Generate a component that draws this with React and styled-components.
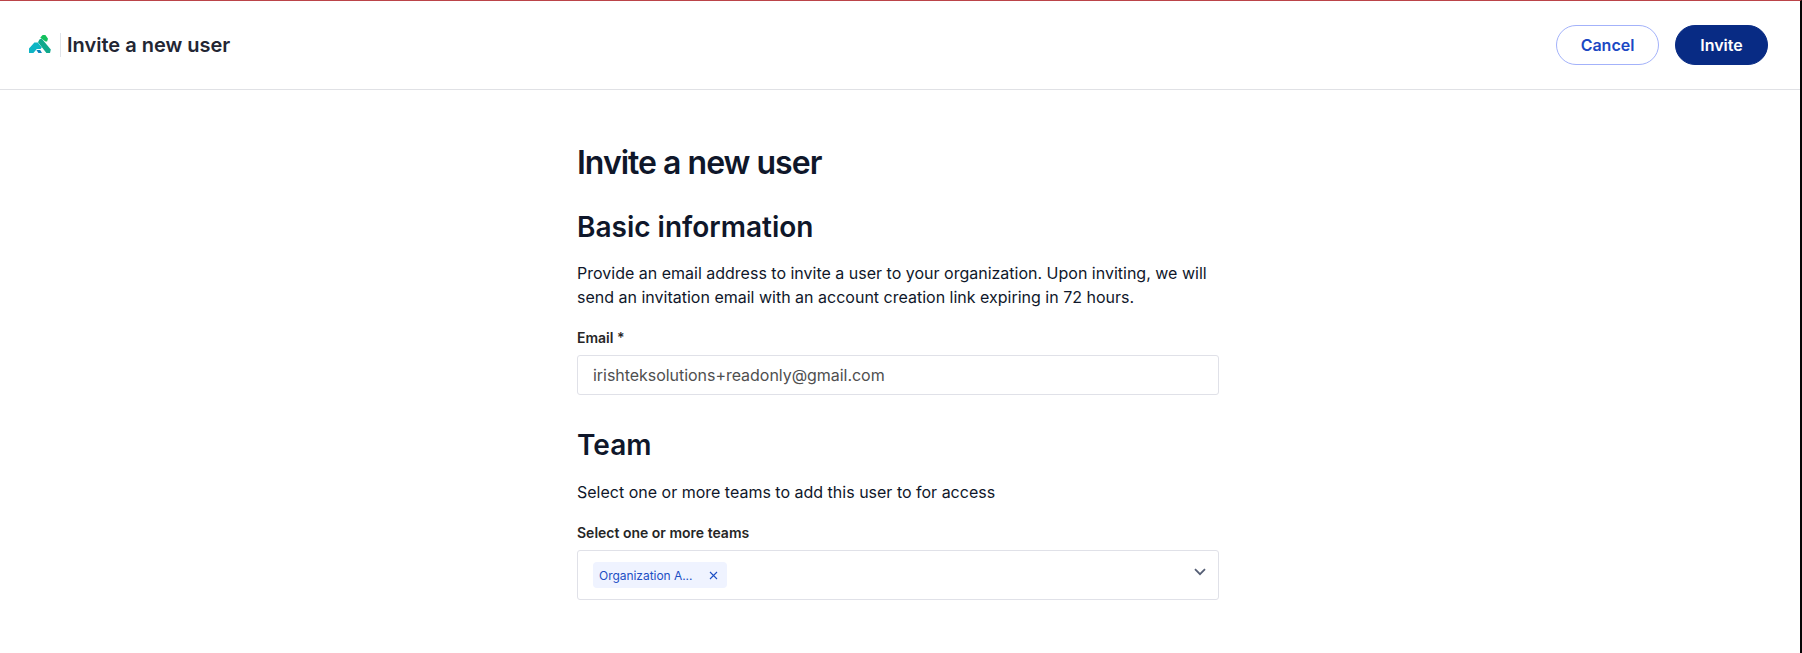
import React from "react";
import styled, { createGlobalStyle } from "styled-components";

const GlobalStyle = createGlobalStyle`
  * { box-sizing: border-box; }
  body {
    margin: 0;
    background: #ffffff;
    font-family: Inter, "Liberation Sans", sans-serif;
    color: #0f172a;
  }
`;

const Page = styled.div`
  min-height: 653px;
  border-top: 1px solid #bb4449;
  border-right: 2px solid #050505;
`;

const Header = styled.header`
  display: flex;
  align-items: center;
  justify-content: space-between;
  height: 89px;
  padding: 0 32px 0 29px;
  border-bottom: 1px solid #e0e1e5;
`;

const Brand = styled.div`
  display: flex;
  align-items: center;
`;

const Logo = styled.svg`
  display: block;
  width: 22px;
  height: 20px;
`;

const Divider = styled.span`
  width: 1px;
  height: 24px;
  margin: 0 6px 0 9px;
  background: #e0e4ea;
`;

const Crumb = styled.span`
  font-size: 20px;
  line-height: 28px;
  font-weight: 600;
  color: #232633;
`;

const Actions = styled.div`
  display: flex;
  gap: 16px;
`;

const Button = styled.button`
  width: ${(p) => (p.$primary ? 93 : 103)}px;
  height: 40px;
  padding: 0;
  border: 1px solid ${(p) => (p.$primary ? "#082b84" : "#a3b2fa")};
  border-radius: 20px;
  background: ${(p) => (p.$primary ? "#082b84" : "#ffffff")};
  color: ${(p) => (p.$primary ? "#ffffff" : "#1b48c4")};
  font: 600 16px/24px Inter, "Liberation Sans", sans-serif;
`;

const Form = styled.main`
  width: 642px;
  margin-left: 577px;
  padding-top: 53px;
`;

const Title = styled.h1`
  margin: 0;
  font-size: 32px;
  line-height: 40px;
  font-weight: 600;
  letter-spacing: -0.031em;
`;

const SectionTitle = styled.h2`
  margin: ${(p) => p.$top}px 0 0;
  font-size: 28px;
  line-height: 36px;
  font-weight: 600;
`;

const Text = styled.p`
  margin: ${(p) => p.$top}px 0 0;
  font-size: 16px;
  line-height: 24px;
`;

const Label = styled.label`
  display: block;
  margin-top: 19px;
  font-size: 14px;
  line-height: 20px;
  font-weight: 600;
  color: #262626;
`;

const Field = styled.div`
  display: flex;
  align-items: center;
  height: 40px;
  margin-top: 7px;
  padding: 0 15px;
  border: 1px solid #e0e1e8;
  border-radius: 3px;
  font-size: 16px;
  letter-spacing: -0.04px;
  color: #4f4f4f;
`;

const Select = styled(Field)`
  justify-content: space-between;
  height: 50px;
  padding-right: 12px;
`;

const Tag = styled.span`
  display: flex;
  align-items: center;
  justify-content: space-between;
  width: 134px;
  height: 26px;
  padding: 0 9px 0 6px;
  border-radius: 4px;
  background: #eff3ff;
  color: #1d4fc4;
  font-size: 12px;
`;

const Icon = styled.svg`
  display: block;
  fill: none;
  stroke: currentColor;
  flex: none;
`;

const Chevron = styled(Icon)`
  color: #555e75;
  margin-bottom: 7px;
`;

export default function App() {
  return (
    <>
      <GlobalStyle />
      <Page>
        <Header>
          <Brand>
            <Logo viewBox="0 0 22 20" aria-hidden="true">
              <path fill="#10a98c" d="M10.4 4.6 12.6 3.6 21.8 14.6 21 18h-3.6L9 7.2Z" />
              <path fill="#12c05c" d="M11.4 2.4 13.6 0h2.8l2.6 3.8-.9 2.8-1.6-.2-5.1-3.6Z" />
              <path fill="#0eb5c4" d="M5.4 7.4h3.4l4 5.2-1.2 1.4H7.8L4.4 18H0v-4.4Z" />
              <path fill="#0c84bd" d="M7.4 14.9h3.8l1.8 3.1H9.4Z" />
            </Logo>
            <Divider />
            <Crumb>Invite a new user</Crumb>
          </Brand>
          <Actions>
            <Button>Cancel</Button>
            <Button $primary>Invite</Button>
          </Actions>
        </Header>
        <Form>
          <Title>Invite a new user</Title>
          <SectionTitle $top={26}>Basic information</SectionTitle>
          <Text $top={16}>
            Provide an email address to invite a user to your organization. Upon inviting, we will send an
            invitation email with an account creation link expiring in 72 hours.
          </Text>
          <Label>Email *</Label>
          <Field>irishteksolutions+readonly@gmail.com</Field>
          <SectionTitle $top={32}>Team</SectionTitle>
          <Text $top={17}>Select one or more teams to add this user to for access</Text>
          <Label>Select one or more teams</Label>
          <Select>
            <Tag>
              Organization A...
              <Icon width="9" height="9" viewBox="0 0 9 9" strokeWidth="1.1">
                <path d="M1 1l7 7M8 1l-7 7" />
              </Icon>
            </Tag>
            <Chevron width="12" height="8" viewBox="0 0 12 8" strokeWidth="1.8">
              <path d="M1 1.2l5 5 5-5" />
            </Chevron>
          </Select>
        </Form>
      </Page>
    </>
  );
}
